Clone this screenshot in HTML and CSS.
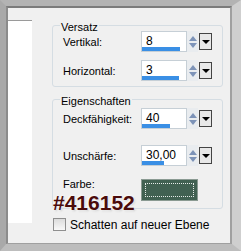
FILE: index.html
```html
<!DOCTYPE html>
<html>
<head>
<meta charset="utf-8">
<link rel="stylesheet" href="styles.css">
</head>
<body>
<div class="win">
  <div class="inner">
    <div class="side"></div>
    <div class="main">
      <div class="group g1">
        <span class="title">Versatz</span>
        <div class="row r1">
          <span class="lbl">Vertikal:</span>
          <div class="ctl"><div class="field"><span class="val">8</span><i class="bar" style="width:38px"></i></div><div class="spin"><b class="up"></b><b class="dn"></b></div><div class="drop"><b></b></div></div>
        </div>
        <div class="row r2">
          <span class="lbl">Horizontal:</span>
          <div class="ctl"><div class="field"><span class="val">3</span><i class="bar" style="width:37px"></i></div><div class="spin"><b class="up"></b><b class="dn"></b></div><div class="drop"><b></b></div></div>
        </div>
      </div>
      <div class="group g2">
        <span class="title">Eigenschaften</span>
        <div class="row r3">
          <span class="lbl">Deckfähigkeit:</span>
          <div class="ctl"><div class="field"><span class="val">40</span><i class="bar" style="width:28px"></i></div><div class="spin"><b class="up"></b><b class="dn"></b></div><div class="drop"><b></b></div></div>
        </div>
        <div class="row r4">
          <span class="lbl">Unschärfe:</span>
          <div class="ctl"><div class="field"><span class="val">30,00</span><i class="bar" style="width:22px"></i></div><div class="spin"><b class="up"></b><b class="dn"></b></div><div class="drop"><b></b></div></div>
        </div>
        <div class="row r5">
          <span class="lbl">Farbe:</span>
          <div class="swatch"><div class="dots"></div></div>
        </div>
      </div>
      <label class="check"><span class="box"></span><span>Schatten auf neuer Ebene</span></label>
      <div class="hex">#416152</div>
    </div>
  </div>
</div>
</body>
</html>
```

FILE: styles.css
```css
html, body { margin: 0; padding: 0; }
body { width: 241px; height: 251px; overflow: hidden; font-family: "Liberation Sans", Arial, sans-serif; font-size: 11px; color: #000; }
.win {
  box-sizing: border-box; width: 241px; height: 251px; display: flex;
  border-top: 6px solid #b3b3b3; border-left: 6px solid #a9a9a9;
  border-right: 9px solid #cfcfcf; border-bottom: 7px solid #bdbdbd;
  background: #f0f0f0;
}
.inner {
  flex: 1; display: flex; background: #f0f0f0;
  border-top: 2px solid #7b7b7b; border-left: 2px solid #8c8c8c;
  border-right: 2px solid #a0a0a0; border-bottom: 1px solid #a0a0a0;
}
.side { width: 24px; height: 203px; margin-top: 12px; background: #fff; border-top: 1px solid #9a9a9a; box-sizing: border-box; }
.main { position: relative; margin-left: 20px; display: flex; flex-direction: column; }
.group { position: relative; width: 171px; box-sizing: border-box; border: 1px solid #d5dde3; border-radius: 3px; }
.g1 { margin-top: 17px; height: 62px; padding-top: 5px; }
.g2 { margin-top: 12px; height: 110px; padding-top: 8px; }
.title { position: absolute; top: -5px; left: 7px; background: #f0f0f0; padding: 0 1px; line-height: 13px; }
.row { display: flex; align-items: center; height: 21px; }
.lbl { width: 78px; padding-left: 10px; }
.r2 { margin-top: 8px; }
.r4 { margin-top: 16px; }
.r5 { margin-top: 13px; height: 22px; align-items: flex-start; }
.r5 .lbl { margin-top: -1px; }
.ctl { display: flex; height: 21px; }
.field { position: relative; width: 46px; box-sizing: border-box; background: #fff; border: 1px solid #c6cfd6; font-size: 12px; }
.val { position: absolute; left: 4px; top: 2px; }
.bar { position: absolute; left: 0; bottom: 0; height: 4px; background: #3a8fe5; }
.spin { width: 11px; display: flex; flex-direction: column; justify-content: center; gap: 2px; align-items: center; background: #e9ecef; }
.spin b { width: 0; height: 0; border-left: 4px solid transparent; border-right: 4px solid transparent; }
.spin .up { border-bottom: 5px solid #7d93b8; }
.spin .dn { border-top: 5px solid #7d93b8; }
.drop { width: 13px; height: 17px; margin-top: 2px; margin-left: 1px; box-sizing: border-box; border: 1px solid #444; background: #e8e8e8; display: flex; align-items: center; justify-content: center; }
.drop b { width: 0; height: 0; border-left: 4px solid transparent; border-right: 4px solid transparent; border-top: 4px solid #000; }
.swatch { width: 57px; height: 22px; box-sizing: border-box; background: #416152; border: 1px solid #8a9a92; padding: 3px; }
.dots { width: 100%; height: 100%; box-sizing: border-box; border: 1px dotted #e6ece9; }
.check { display: flex; align-items: center; gap: 4px; margin-top: 8px; margin-left: 1px; height: 15px; font-size: 12px; }
.box { width: 13px; height: 13px; box-sizing: border-box; border: 1px solid #8f8f8f; background: linear-gradient(#dcdcdc, #f8f8f8); }
.hex { position: absolute; left: 1px; top: 183px; font-size: 21px; font-weight: bold; color: #4b0b0b; text-shadow: 0 0 3px #fff, 0 0 3px #fff, 1px 1px 2px #bbb; }
```
